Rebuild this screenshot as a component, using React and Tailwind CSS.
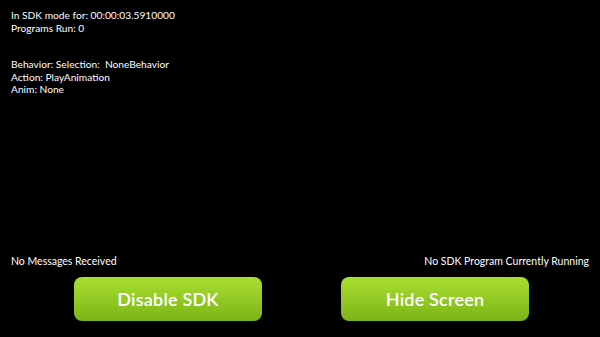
import React from 'react';

const Button = ({ children }) => (
  <button className="w-[188px] h-[44px] rounded-[8px] bg-gradient-to-b from-[#a9df30] to-[#7cb418] text-white text-[18px] font-semibold tracking-[0.2px] shadow-[0_1px_2px_rgba(0,0,0,0.6)]">
    {children}
  </button>
);

const App = () => {
  return (
    <div
      className="w-[600px] h-[337px] bg-black text-white flex flex-col justify-between"
      style={{ fontFamily: 'Lato, "Noto Sans", sans-serif' }}
    >
      {/* Status info */}
      <div className="pt-[9px] px-[11px] text-[10.2px] leading-[12.5px]">
        <div>In SDK mode for: 00:00:03.5910000</div>
        <div>Programs Run: 0</div>
        <div className="mt-[24px]">Behavior: Selection:&nbsp; NoneBehavior</div>
        <div>Action: PlayAnimation</div>
        <div>Anim: None</div>
      </div>

      <div className="pb-[16px]">
        <div className="flex justify-between px-[11px] text-[10.5px] leading-[12px]">
          <span>No Messages Received</span>
          <span>No SDK Program Currently Running</span>
        </div>
        <div className="flex justify-center gap-[79px] mt-[10px] pl-[3px]">
          <Button>Disable SDK</Button>
          <Button>Hide Screen</Button>
        </div>
      </div>
    </div>
  );
};

export default App;
